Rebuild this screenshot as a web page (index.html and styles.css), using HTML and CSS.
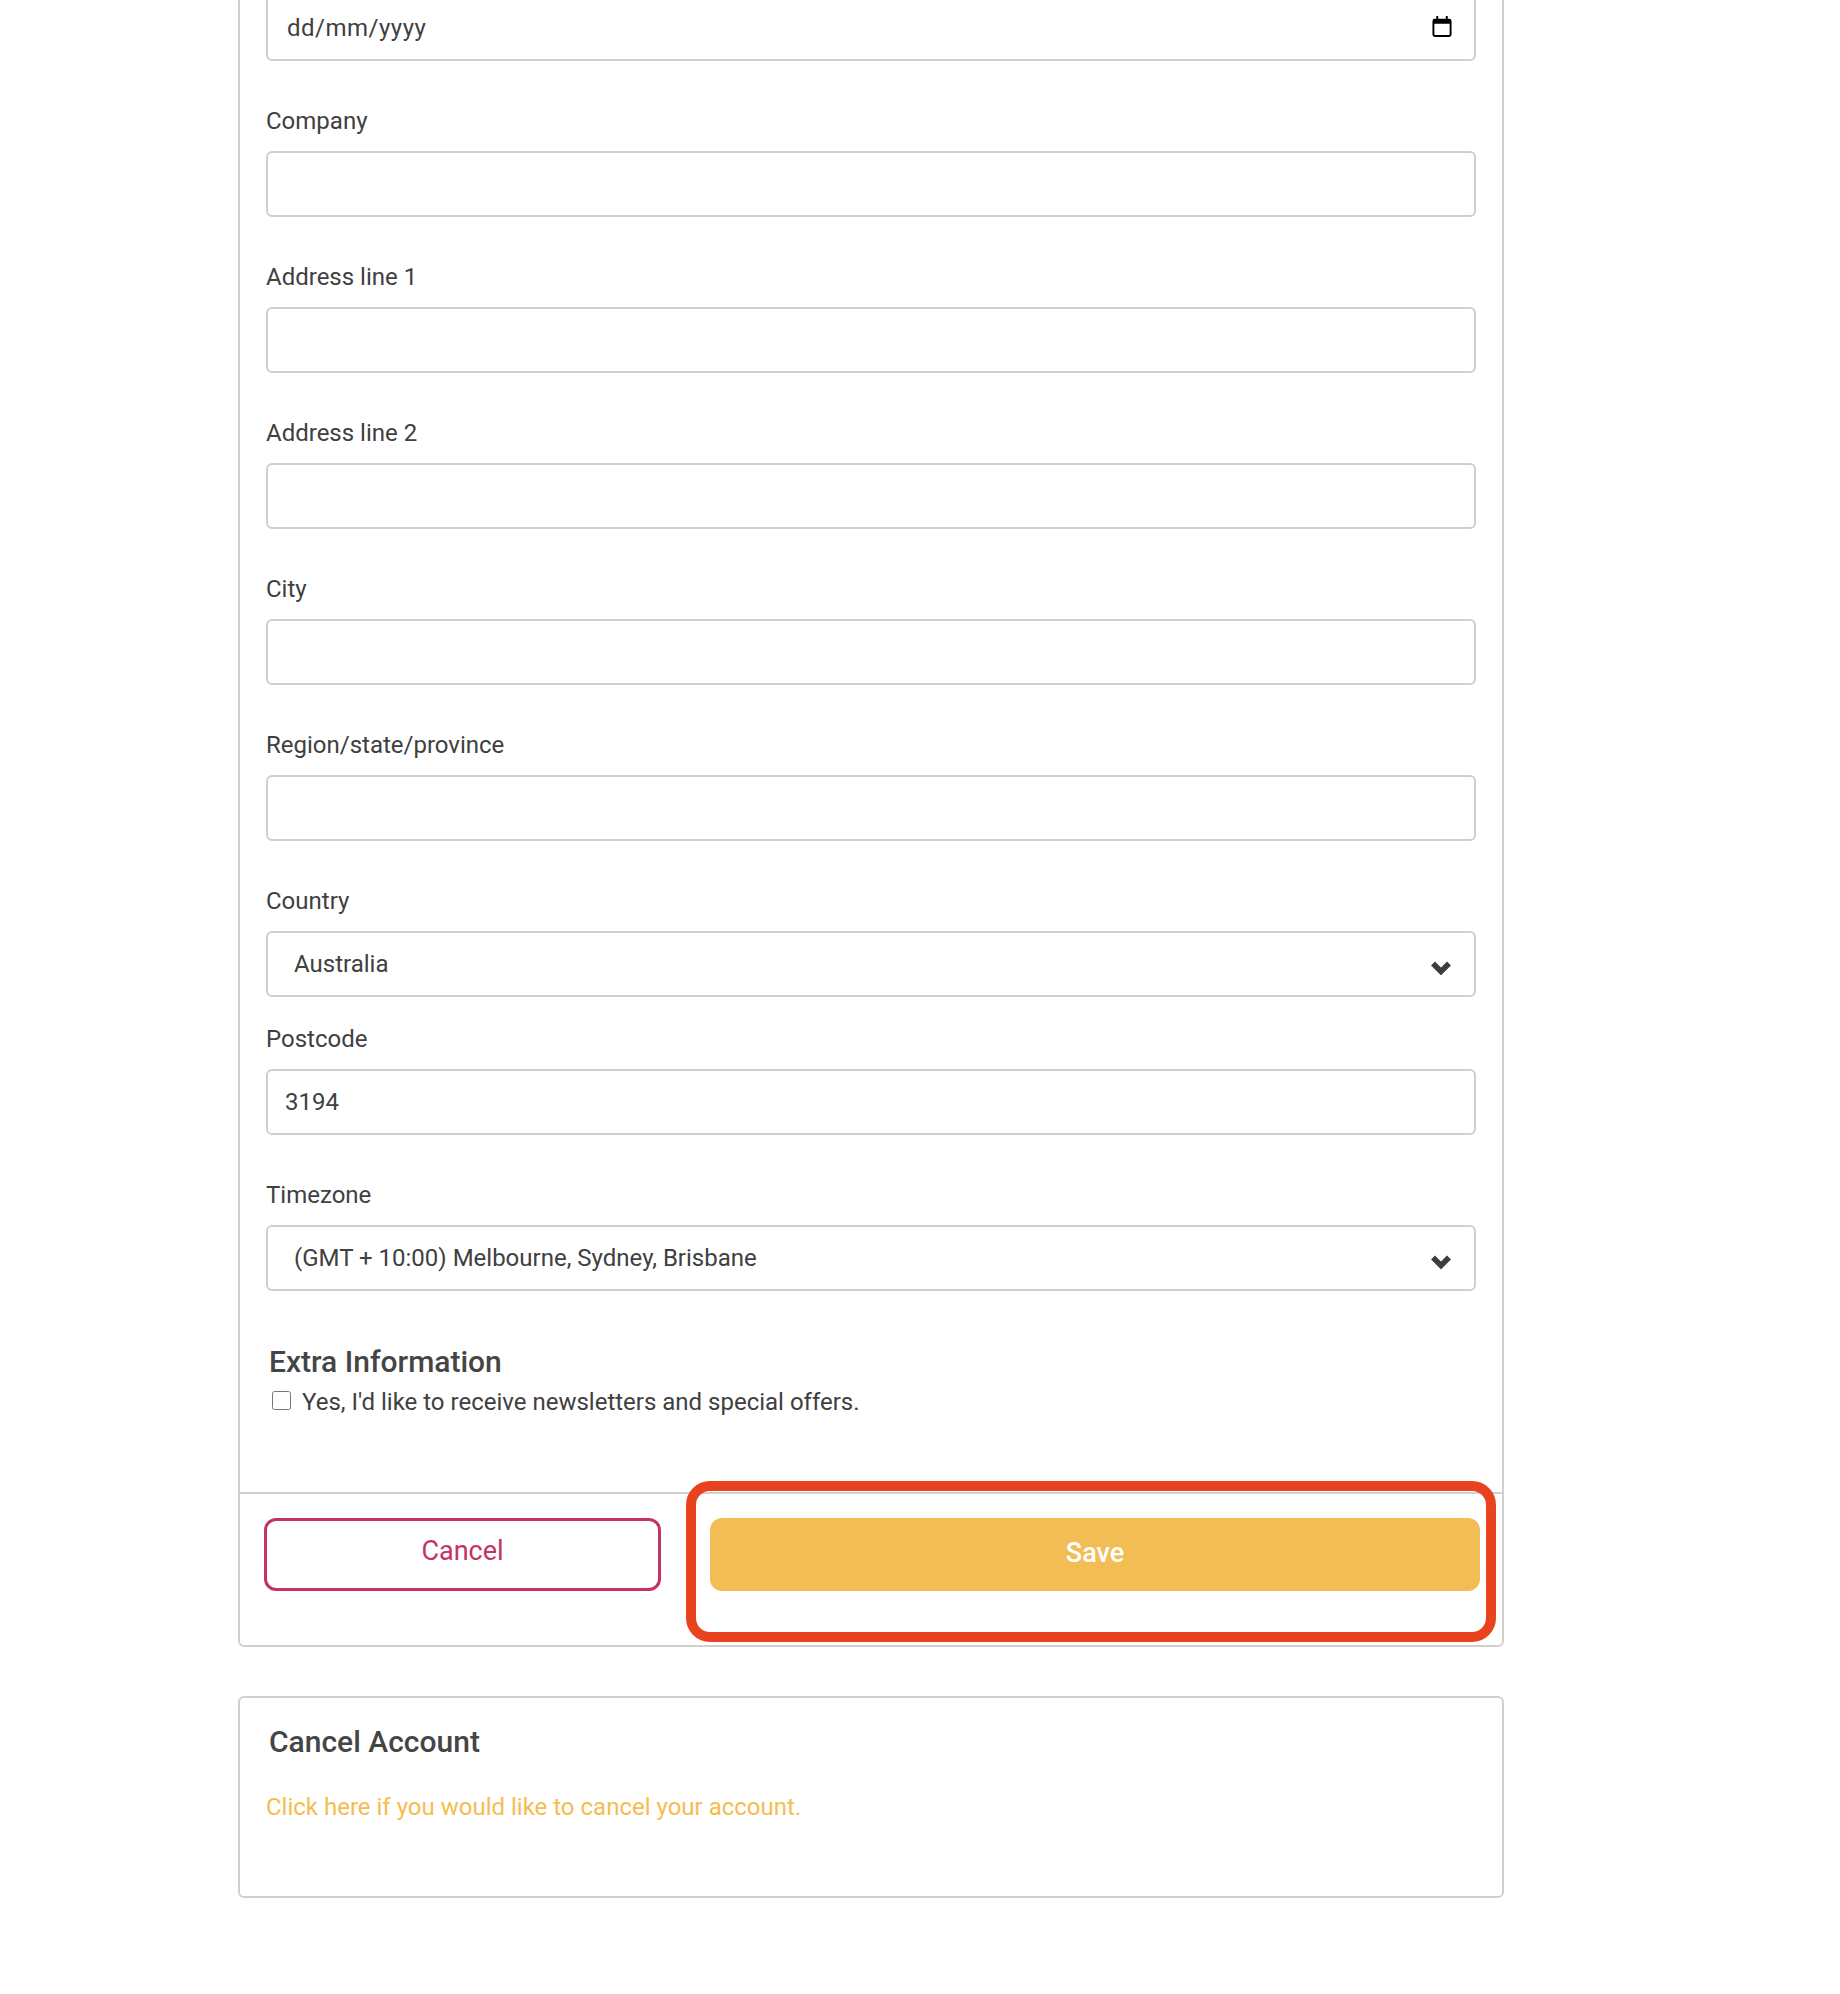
FILE: index.html
```html
<!DOCTYPE html>
<html lang="en">
<head>
    <meta charset="UTF-8">
    <meta name="viewport" content="width=device-width, initial-scale=1.0">
    <title>Account Details</title>
    <link rel="stylesheet" href="styles.css">
</head>
<body>
    <div class="page">
        <form class="card details-card">
            <div class="card-body">
                <div class="field">
                    <input class="form-input date-input" type="text" value="dd/mm/yyyy" aria-label="Date of birth">
                    <svg class="date-icon" viewBox="0 0 20 22" width="20" height="21">
                        <path d="M4 0h2v3h8V0h2v3h1.500A2.500 2.500 0 0 1 20 5.500v14a2.500 2.500 0 0 1-2.500 2.500h-15A2.500 2.500 0 0 1 0 19.500v-14A2.500 2.500 0 0 1 2.500 3H4z M2 8v11.500a.5.5 0 0 0 .5.5h15a.5.5 0 0 0 .5-.5V8z" fill="#000" fill-rule="evenodd"/>
                    </svg>
                </div>
                <div class="field">
                    <label for="company">Company</label>
                    <input class="form-input" type="text" id="company">
                </div>
                <div class="field">
                    <label for="address1">Address line 1</label>
                    <input class="form-input" type="text" id="address1">
                </div>
                <div class="field">
                    <label for="address2">Address line 2</label>
                    <input class="form-input" type="text" id="address2">
                </div>
                <div class="field">
                    <label for="city">City</label>
                    <input class="form-input" type="text" id="city">
                </div>
                <div class="field">
                    <label for="region">Region/state/province</label>
                    <input class="form-input" type="text" id="region">
                </div>
                <div class="field field-tight">
                    <label for="country">Country</label>
                    <div class="select-wrap">
                        <select class="form-input form-select" id="country">
                            <option>Australia</option>
                        </select>
                        <svg class="select-icon" viewBox="0 0 22 15" width="22" height="15">
                            <path d="M3 3.500l8 8 8-8" fill="none" stroke="#3d3d3d" stroke-width="5.500"/>
                        </svg>
                    </div>
                </div>
                <div class="field">
                    <label for="postcode">Postcode</label>
                    <input class="form-input" type="text" id="postcode" value="3194">
                </div>
                <div class="field">
                    <label for="timezone">Timezone</label>
                    <div class="select-wrap">
                        <select class="form-input form-select" id="timezone">
                            <option>(GMT + 10:00) Melbourne, Sydney, Brisbane</option>
                        </select>
                        <svg class="select-icon" viewBox="0 0 22 15" width="22" height="15">
                            <path d="M3 3.500l8 8 8-8" fill="none" stroke="#3d3d3d" stroke-width="5.500"/>
                        </svg>
                    </div>
                </div>
                <h3 class="section-title">Extra Information</h3>
                <label class="check-row">
                    <input type="checkbox" class="check-box">
                    <span>Yes, I'd like to receive newsletters and special offers.</span>
                </label>
            </div>
            <div class="card-footer">
                <button type="button" class="btn btn-cancel"><span>Cancel</span></button>
                <button type="button" class="btn btn-save">Save</button>
                <div class="highlight-box"></div>
            </div>
        </form>

        <div class="card cancel-card">
            <h3 class="cancel-title">Cancel Account</h3>
            <a href="#" class="cancel-link">Click here if you would like to cancel your account.</a>
        </div>
    </div>
</body>
</html>
```

FILE: styles.css
```css
html, body {
    margin: 0;
    padding: 0;
    background-color: #fff;
}

body {
    height: 1994px;
    overflow: hidden;
    font-family: Roboto, Arial, sans-serif;
    font-size: 24px;
    color: #404040;
}

.page {
    width: 1266px;
    margin-left: 238px;
    margin-top: -30px;
}

.card {
    border: 2px solid #d0d0d0;
    border-radius: 6px;
    box-sizing: border-box;
}

.details-card {
    height: 1677px;
    display: flex;
    flex-direction: column;
}

.card-body {
    flex: 1;
    padding: 23px 26px 0 26px;
}

.field {
    position: relative;
    margin-bottom: 42px;
}

.field-tight {
    margin-bottom: 24px;
}

.field label {
    display: block;
    line-height: 36px;
    margin-bottom: 12px;
}

.form-input {
    display: block;
    width: 100%;
    height: 66px;
    box-sizing: border-box;
    padding: 0 17px;
    border: 2px solid #d0d0d0;
    border-radius: 6px;
    background-color: #fff;
    font-family: Roboto, Arial, sans-serif;
    font-size: 24px;
    color: #404040;
}

.date-input {
    padding-left: 19px;
    letter-spacing: 0.5px;
}

.date-icon {
    position: absolute;
    right: 24px;
    top: 21px;
}

.select-wrap {
    position: relative;
}

.form-select {
    appearance: none;
    padding-left: 26px;
}

.select-icon {
    position: absolute;
    right: 24px;
    top: 29px;
}

.section-title {
    margin: 53px 0 0 3px;
    font-size: 30px;
    font-weight: 500;
    line-height: 36px;
    color: #454545;
}

.check-row {
    display: flex;
    align-items: center;
    line-height: 34px;
    margin-top: 5px;
    margin-left: 5px;
}

.check-box {
    width: 19px;
    height: 19px;
    margin: 0 11px 4px 1px;
}

.card-footer {
    position: relative;
    display: grid;
    grid-template-columns: 397px 770px;
    column-gap: 49px;
    height: 153px;
    box-sizing: border-box;
    padding: 24px 24px 0 24px;
    border-top: 2px solid #d0d0d0;
}

.btn {
    height: 73px;
    box-sizing: border-box;
    border-radius: 12px;
    font-family: Roboto, Arial, sans-serif;
    font-size: 27px;
    cursor: pointer;
}

.btn-cancel {
    border: 3px solid #c5345c;
    background-color: #fff;
    color: #c5345c;
    padding: 0 0 8px 0;
}

.btn-save {
    border: none;
    background-color: #f2bd54;
    color: #fff;
    font-weight: 500;
    padding: 0 0 3px 0;
}

.highlight-box {
    position: absolute;
    left: 446px;
    right: 6px;
    top: -13px;
    height: 161px;
    box-sizing: border-box;
    border: 10px solid #e8431e;
    border-radius: 24px;
}

.cancel-card {
    height: 202px;
    margin-top: 49px;
    padding: 26px 26px 0 26px;
}

.cancel-title {
    margin: 0 0 0 3px;
    font-size: 30px;
    font-weight: 500;
    line-height: 36px;
    color: #454545;
}

.cancel-link {
    display: block;
    margin-top: 30px;
    line-height: 34px;
    color: #f5bc4f;
    text-decoration: none;
}
```
